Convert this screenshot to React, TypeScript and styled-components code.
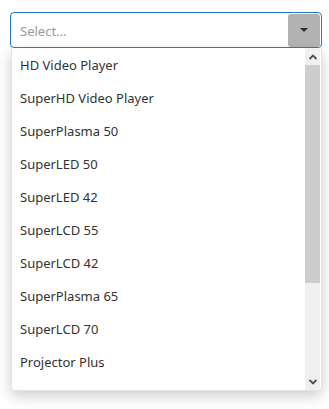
import React from 'react'
import styled, { createGlobalStyle } from 'styled-components'

const products = [
	'HD Video Player',
	'SuperHD Video Player',
	'SuperPlasma 50',
	'SuperLED 50',
	'SuperLED 42',
	'SuperLCD 55',
	'SuperLCD 42',
	'SuperPlasma 65',
	'SuperLCD 70',
	'Projector Plus',
]

const Global = createGlobalStyle`
	html, body {
		margin: 0;
		background: #ffffff;
	}
	body {
		font-family: 'Noto Sans', 'Open Sans', sans-serif;
		color: #333333;
	}
`

const App = () => {
	return (
		<Page>
			<Global />
			<SelectBox>
				<Placeholder>Select...</Placeholder>
				<DropButton>
					<Caret />
				</DropButton>
			</SelectBox>

			<Popup>
				<List>
					{products.map((name) => (
						<Item key={name}>{name}</Item>
					))}
				</List>
				<ScrollBar>
					<ArrowButton>
						<Chevron viewBox="0 0 8 6">
							<path d="M0.5 5 L4 1.5 L7.5 5" />
						</Chevron>
					</ArrowButton>
					<Track>
						<Thumb />
					</Track>
					<ArrowButton>
						<Chevron viewBox="0 0 8 6">
							<path d="M0.5 1 L4 4.5 L7.5 1" />
						</Chevron>
					</ArrowButton>
				</ScrollBar>
			</Popup>
		</Page>
	)
}

export default App

const Page = styled.div`
	width: 329px;
	height: 409px;
	padding: 12px 7px 0 10px;
	box-sizing: border-box;
	display: flex;
	flex-direction: column;
`

const SelectBox = styled.div`
	height: 36px;
	box-sizing: border-box;
	border: 1px solid #2b7bc6;
	border-radius: 4px;
	display: flex;
	align-items: center;
	justify-content: space-between;
	padding: 1px 0 0 9px;
`

const Placeholder = styled.span`
	font-size: 13px;
	color: #9a9a9a;
`

const DropButton = styled.div`
	width: 32px;
	height: 33px;
	margin-top: -1px;
	background: #b3b3b3;
	border-radius: 3px;
	display: flex;
	align-items: center;
	justify-content: center;
	margin-right: 1px;
`

const Caret = styled.span`
	width: 0;
	height: 0;
	border-left: 4px solid transparent;
	border-right: 4px solid transparent;
	border-top: 4px solid #2d2d2d;
`

const Popup = styled.div`
	height: 343px;
	box-sizing: border-box;
	margin-left: 1px;
	border: 1px solid #e4e4e4;
	border-top: none;
	border-radius: 0 0 4px 4px;
	box-shadow: 0 5px 14px rgba(0, 0, 0, 0.2);
	display: flex;
	overflow: hidden;
	background: #ffffff;
`

const List = styled.ul`
	flex: 1;
	list-style: none;
	margin: 0;
	padding: 1px 0 0;
	overflow: hidden;
`

const Item = styled.li`
	height: 33px;
	line-height: 33px;
	padding-left: 8px;
	font-size: 13px;
	color: #333333;
	white-space: nowrap;
`

const ScrollBar = styled.div`
	width: 15px;
	margin-right: 1px;
	background: #f0f0f0;
	display: flex;
	flex-direction: column;
`

const ArrowButton = styled.div`
	height: 17px;
	display: flex;
	align-items: center;
	justify-content: center;
	flex-shrink: 0;
`

const Chevron = styled.svg`
	width: 8px;
	height: 6px;
	fill: none;
	stroke: #505050;
	stroke-width: 1.8;
`

const Track = styled.div`
	flex: 1;
	display: flex;
	flex-direction: column;
`

const Thumb = styled.div`
	height: 218px;
	background: #cdcdcd;
`
